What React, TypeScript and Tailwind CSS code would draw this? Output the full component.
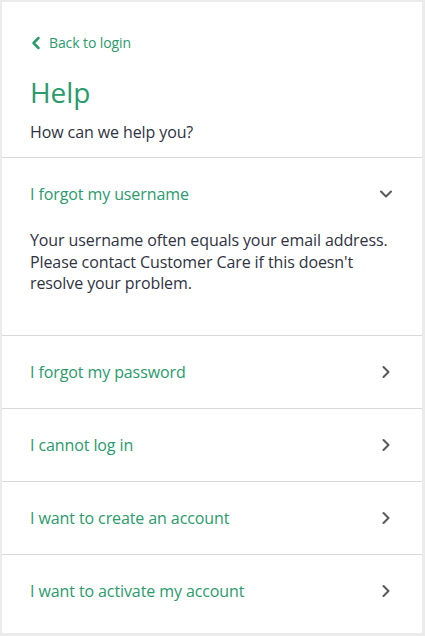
import { useState } from "react"
import { ChevronLeft, ChevronRight, ChevronDown } from "lucide-react"

const topics = [
  {
    id: "username",
    title: "I forgot my username",
    body: "Your username often equals your email address. Please contact Customer Care if this doesn't resolve your problem.",
  },
  { id: "password", title: "I forgot my password", body: "" },
  { id: "login", title: "I cannot log in", body: "" },
  { id: "create", title: "I want to create an account", body: "" },
  { id: "activate", title: "I want to activate my account", body: "" },
]

export default function App() {
  const [open, setOpen] = useState("username")

  return (
    <div className="min-h-[636px] bg-[#ebebeb] pt-[2px] pb-[3px] pl-[2px] pr-[3px] font-['Open_Sans',sans-serif] tracking-[-0.1px]">
      <div className="bg-white min-h-[631px]">
        <div className="px-7 pt-[31px] pb-[14px]">
          <a href="#" className="flex items-center gap-[3px] text-sm leading-5 text-[#2b9a6c]">
            <ChevronLeft className="size-5 -ml-[4px]" strokeWidth={3} />
            <span>Back to login</span>
          </a>
          <h1 className="mt-[20px] text-[28px] leading-[38px] text-[#2b9a6c]">Help</h1>
          <p className="mt-[10px] text-base leading-[22px] text-[#2f3242]">How can we help you?</p>
        </div>

        <div className="border-t border-[#d9d9d9]">
          {topics.map((t) => {
            const isOpen = open === t.id
            return (
              <div key={t.id} className="border-b border-[#d9d9d9] last:border-b-0">
                <button
                  onClick={() => setOpen(isOpen ? "" : t.id)}
                  className="flex h-[72px] w-full items-center justify-between pl-7 pr-[26px] text-left"
                >
                  <span className="text-base text-[#2b9a6c]">{t.title}</span>
                  {isOpen ? (
                    <ChevronDown className="size-5 text-[#5a5a5a]" strokeWidth={2.5} />
                  ) : (
                    <ChevronRight className="size-5 text-[#5a5a5a]" strokeWidth={2.5} />
                  )}
                </button>
                {isOpen && t.body && (
                  <p className="px-7 pb-[40px] text-base leading-[21.5px] text-[#2f3242]">{t.body}</p>
                )}
              </div>
            )
          })}
        </div>
      </div>
    </div>
  )
}
